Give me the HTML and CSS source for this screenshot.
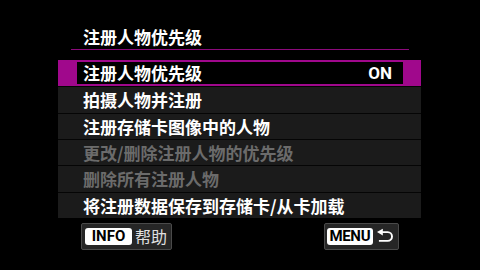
FILE: index.html
```html
<!DOCTYPE html>
<html>
    <head>
        <title>注册人物优先级</title>
        <link rel="stylesheet" href="styles.css">
    </head>
    <body>
    <div class="screen">
        <div class="title"><span class="title-text">注册人物优先级</span></div>
        <div class="menu">
            <div class="row row-selected">
                <div class="sel-inner">
                    <span>注册人物优先级</span>
                    <span class="value">ON</span>
                </div>
            </div>
            <div class="row">拍摄人物并注册</div>
            <div class="row">注册存储卡图像中的人物</div>
            <div class="row row-disabled">更改/删除注册人物的优先级</div>
            <div class="row row-disabled">删除所有注册人物</div>
            <div class="row">将注册数据保存到存储卡/从卡加载</div>
        </div>
        <div class="footer">
            <div class="key key-info"><span class="key-label">INFO</span><span class="key-text">帮助</span></div>
            <div class="key key-menu">
                <span class="key-label">MENU</span>
                <svg class="back-icon" width="20" height="16" viewBox="0 0 20 16">
                    <path d="M6 4 H12 A4.5 4.5 0 0 1 12 13 H3" fill="none" stroke="#fff" stroke-width="2"/>
                    <polygon points="1,4 7,0.5 7,7.5" fill="#fff"/>
                </svg>
            </div>
        </div>
    </div>
    </body>
</html>
```

FILE: styles.css
```css
html, body {
    margin: 0;
    padding: 0;
    background: #000;
}

body {
    width: 480px;
    height: 270px;
    overflow: hidden;
    color: #fff;
    font-family: "Noto Sans CJK SC", "Noto Sans", sans-serif;
    font-weight: 600;
    font-size: 17px;
}

.title {
    margin-left: 71px;
    width: 338px;
    padding-top: 27px;
    padding-bottom: 2px;
    line-height: 20px;
    border-bottom: 1px solid #8c0a7c;
}

.title-text {
    display: block;
    padding-left: 12px;
}

.menu {
    margin-top: 10px;
    margin-left: 58px;
    width: 363px;
}

.row {
    box-sizing: border-box;
    height: 26.33px;
    line-height: 25px;
    padding-left: 25px;
    background: #1b1b1b;
    border-top: 1px solid #050505;
    white-space: nowrap;
}

.row-selected {
    background: #a0088c;
    border-top: none;
    padding: 2px 18px 2px 19px;
}

.sel-inner {
    display: flex;
    justify-content: space-between;
    align-items: center;
    height: 100%;
    background: #000;
    padding: 0 11px 0 6px;
    line-height: 22px;
}

.value {
    font-family: Roboto, "Liberation Sans", sans-serif;
    font-weight: 700;
    font-size: 17px;
}

.row-disabled {
    color: #6b6b6b;
}

.footer {
    display: flex;
    justify-content: space-between;
    margin: 5px 0 0 81px;
    width: 318px;
}

.key {
    box-sizing: border-box;
    display: flex;
    align-items: center;
    height: 27px;
    background: #262626;
    border: 1px solid #4a4a4a;
    border-radius: 2px;
    padding: 0 3px;
}

.key-info {
    width: 91px;
}

.key-menu {
    width: 75px;
    padding-left: 2px;
}

.key-label {
    background: #fff;
    color: #000;
    border-radius: 3px;
    font-family: Roboto, "Liberation Sans", sans-serif;
    font-weight: 700;
    font-size: 15px;
    line-height: 17px;
    height: 17px;
    text-align: center;
}

.key-info .key-label {
    width: 47px;
}

.key-menu .key-label {
    width: 47px;
    letter-spacing: -0.3px;
}

.key-text {
    margin-left: 3px;
    color: #e0e0e0;
    font-weight: 400;
    font-size: 16px;
    line-height: 20px;
}

.back-icon {
    margin-left: 3px;
}
```
